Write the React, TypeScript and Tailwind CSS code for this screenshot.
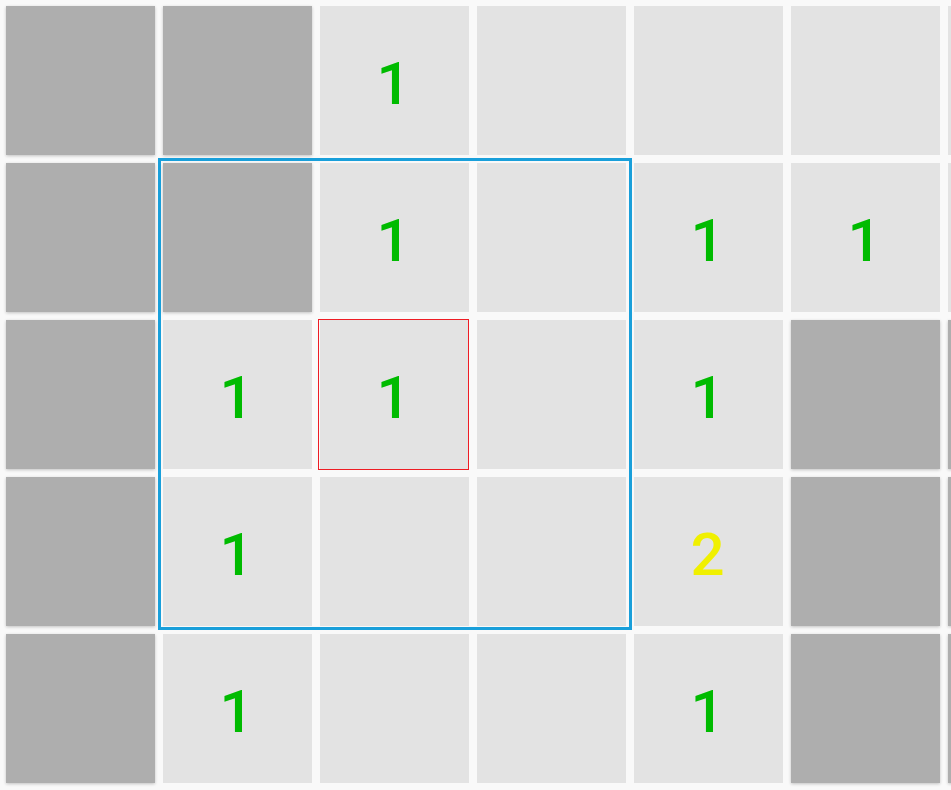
import React from "react";

type Cell = { dark?: boolean; n?: number };

const D: Cell = { dark: true };
const E: Cell = {};
const one: Cell = { n: 1 };
const two: Cell = { n: 2 };

const grid: Cell[][] = [
  [D, D, one, E, E, E, E],
  [D, D, one, E, one, one, E],
  [D, one, one, E, one, D, D],
  [D, one, E, E, two, D, D],
  [D, one, E, E, one, D, D],
];

export default function App() {
  return (
    <div className="w-[951px] h-[790px] overflow-hidden bg-[#f9f9f9] relative">
      <div className="grid grid-cols-[repeat(7,149px)] auto-rows-[149px] gap-2 p-[6px]">
        {grid.flatMap((row, r) =>
          row.map((c, ci) => (
            <div
              key={`${r}-${ci}`}
              className={
                c.dark
                  ? "bg-[#aeaeae] shadow-[0_1px_3px_rgba(0,0,0,0.22)] flex items-center justify-center"
                  : "bg-[#e3e3e3] flex items-center justify-center relative"
              }
            >
              {r === 2 && ci === 2 && (
                <div className="absolute -left-[2px] -top-[1px] -right-[0px] -bottom-[1px] border-solid border-[1px] border-[color:#ee1c24]" />
              )}
              {c.n !== undefined && (
                <span
                  className={
                    "text-[60px] leading-none font-medium pt-[6px] pr-[2px] " +
                    (c.n === 1 ? "text-[#00bb00]" : "text-[#f0f000]")
                  }
                  style={{ fontFamily: "Roboto, 'Noto Sans', sans-serif" }}
                >
                  {c.n}
                </span>
              )}
            </div>
          ))
        )}
      </div>
      <div className="absolute left-[158px] top-[158px] w-[474px] h-[472px] border-[3px] border-[#199fda]" />
    </div>
  );
}
